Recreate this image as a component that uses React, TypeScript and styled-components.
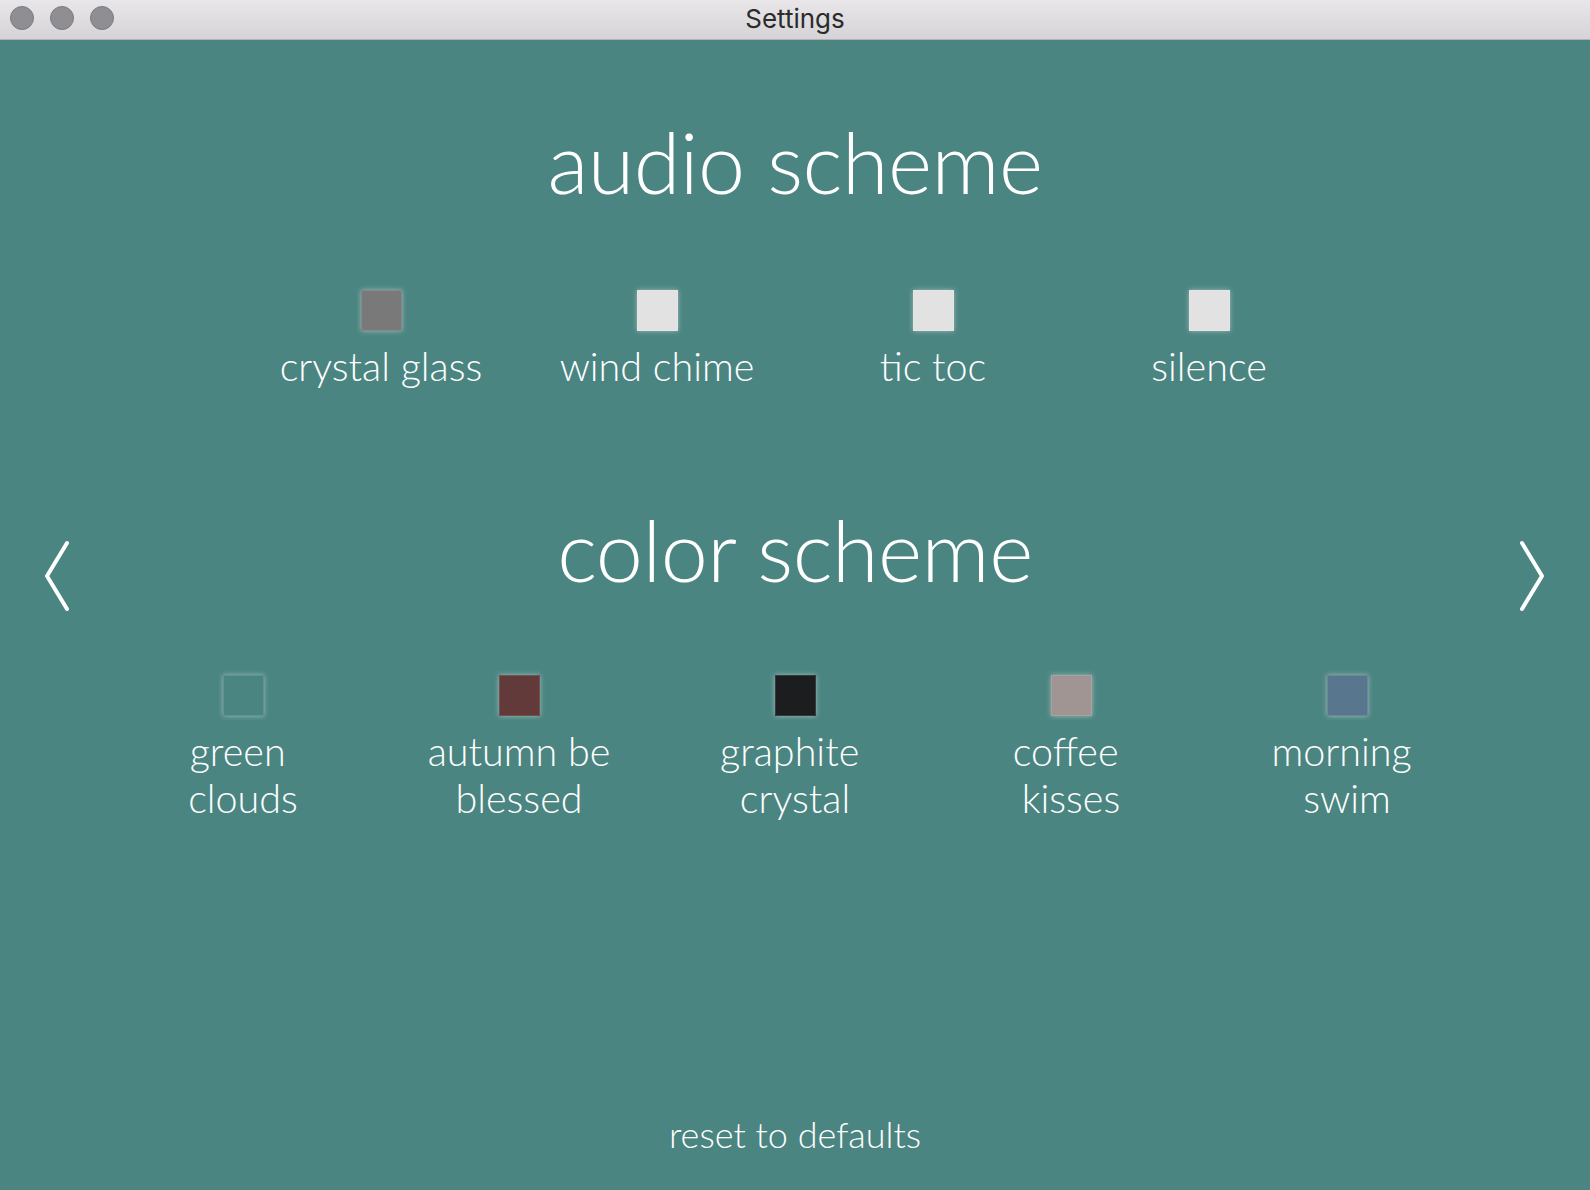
import styled, { createGlobalStyle } from "styled-components";

const GlobalStyle = createGlobalStyle`
  html, body {
    margin: 0;
    padding: 0;
    background: #4b8581;
  }
  * {
    box-sizing: border-box;
  }
`;

const Window = styled.div`
  display: flex;
  flex-direction: column;
  width: 1590px;
  height: 1190px;
  overflow: hidden;
  background-color: #4b8581;
  font-family: Lato, "Open Sans", sans-serif;
  font-weight: 300;
  color: #ffffff;
`;

const TitleBar = styled.div`
  display: flex;
  align-items: center;
  justify-content: center;
  position: relative;
  height: 40px;
  flex-shrink: 0;
  background: linear-gradient(to bottom, #e9e7e9, #d5d3d5);
  border-bottom: 1px solid #b3b1b3;
`;

const Lights = styled.div`
  position: absolute;
  left: 10px;
  top: 6px;
  display: flex;
  gap: 16px;
`;

const Light = styled.span`
  width: 24px;
  height: 24px;
  border-radius: 50%;
  background-color: #8f8e92;
  border: 1px solid #7b7a7e;
`;

const WindowTitle = styled.div`
  font-family: Inter, "Liberation Sans", sans-serif;
  font-weight: 400;
  font-size: 26px;
  color: #2b2b2b;
  margin-top: -2px;
`;

const Content = styled.div`
  flex: 1;
  display: flex;
  flex-direction: column;
  align-items: center;
`;

const HeaderRow = styled.div<{ $top: number }>`
  display: flex;
  align-items: flex-start;
  justify-content: space-between;
  width: 100%;
  padding: 0 44px;
  margin-top: ${(p) => p.$top}px;
`;

const Heading = styled.h1<{ $top?: number }>`
  margin: ${(p) => p.$top ?? 0}px 0 0;
  font-size: 84.5px;
  font-weight: 300;
  line-height: 100px;
  letter-spacing: -0.5px;
`;

const ArrowButton = styled.button`
  display: flex;
  width: 28px;
  height: 72px;
  padding: 0;
  margin-top: 40px;
  border: none;
  background: none;
  cursor: pointer;
`;

const OptionRow = styled.div<{ $top: number }>`
  display: flex;
  justify-content: center;
  margin-top: ${(p) => p.$top}px;
`;

const Option = styled.div`
  display: flex;
  flex-direction: column;
  align-items: center;
  width: 276px;
  cursor: pointer;
`;

const Swatch = styled.div<{ $color: string }>`
  width: 41px;
  height: 41px;
  background-color: ${(p) => p.$color};
  border: 1px solid rgba(255, 255, 255, 0.12);
  box-shadow: 0 0 5px rgba(255, 255, 255, 0.45);
`;

const Label = styled.div`
  margin-top: 11px;
  font-size: 39.5px;
  line-height: 47px;
  text-align: center;
  white-space: nowrap;
`;

const Line = styled.span`
  display: block;
`;

const ResetLink = styled.div`
  margin-top: auto;
  margin-bottom: 34px;
  font-size: 36px;
  line-height: 44px;
  cursor: pointer;
`;

const audioOptions = [
  { name: "crystal glass", color: "#797979" },
  { name: "wind chime", color: "#e2e2e2" },
  { name: "tic toc", color: "#e2e2e2" },
  { name: "silence", color: "#e2e2e2" },
];

const colorOptions = [
  { name: ["green\u00a0", "clouds"], color: "#4b8581" },
  { name: ["autumn be", "blessed"], color: "#633a3a" },
  { name: ["graphite\u00a0", "crystal"], color: "#1c1d1f" },
  { name: ["coffee\u00a0", "kisses"], color: "#a09593" },
  { name: ["morning\u00a0", "swim"], color: "#58778e" },
];

function Chevron({ dir }: { dir: "left" | "right" }) {
  const d = dir === "left" ? "M23 3 L3 36 L23 69" : "M4 3 L24 36 L4 69";
  return (
    <svg width="28" height="72" viewBox="0 0 28 72">
      <path
        d={d}
        fill="none"
        stroke="#ffffff"
        strokeWidth="4"
        strokeLinecap="round"
        strokeLinejoin="round"
      />
    </svg>
  );
}

export default function App() {
  return (
    <Window>
      <GlobalStyle />
      <TitleBar>
        <Lights>
          <Light />
          <Light />
          <Light />
        </Lights>
        <WindowTitle>Settings</WindowTitle>
      </TitleBar>
      <Content>
        <Heading $top={72}>audio scheme</Heading>
        <OptionRow $top={78}>
          {audioOptions.map((o) => (
            <Option key={o.name}>
              <Swatch $color={o.color} />
              <Label>{o.name}</Label>
            </Option>
          ))}
        </OptionRow>
        <HeaderRow $top={111}>
          <ArrowButton>
            <Chevron dir="left" />
          </ArrowButton>
          <Heading>color scheme</Heading>
          <ArrowButton>
            <Chevron dir="right" />
          </ArrowButton>
        </HeaderRow>
        <OptionRow $top={63}>
          {colorOptions.map((o) => (
            <Option key={o.name.join(" ")}>
              <Swatch $color={o.color} />
              <Label>
                <Line>{o.name[0]}</Line>
                <Line>{o.name[1]}</Line>
              </Label>
            </Option>
          ))}
        </OptionRow>
        <ResetLink>reset to defaults</ResetLink>
      </Content>
    </Window>
  );
}
